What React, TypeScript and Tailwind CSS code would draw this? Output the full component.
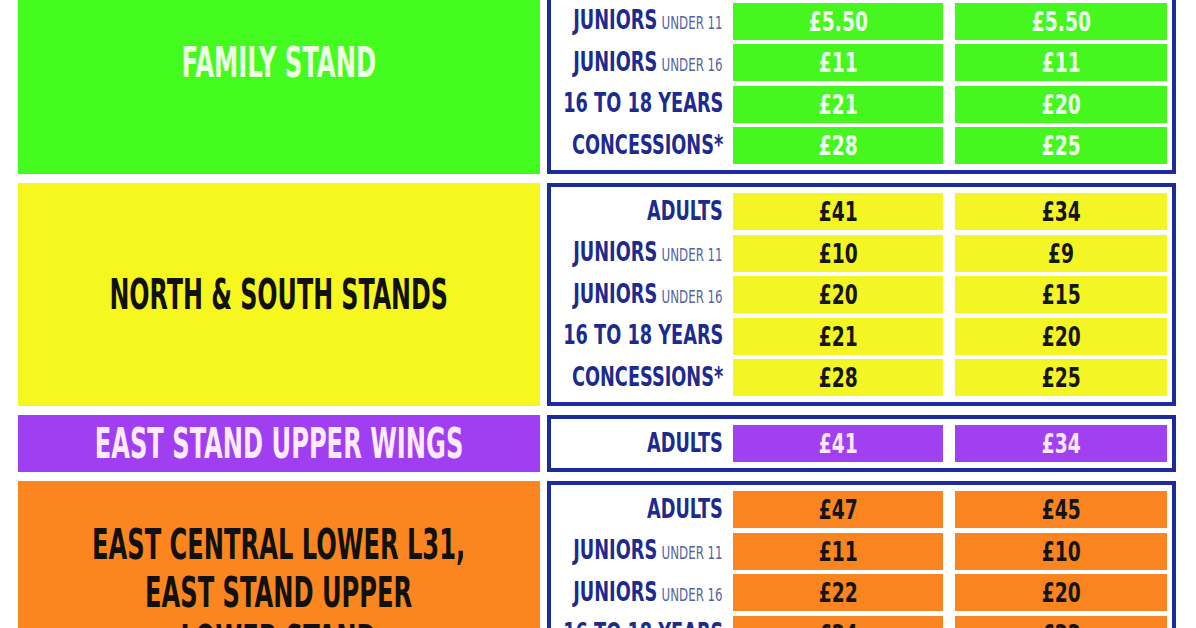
import React from "react";

type Row = { main: string; sub?: string; a: string; b: string };
type Section = {
  panel: string;
  cell: string;
  headText: string;
  cellText: string;
  heading: string[];
  headScale: string;
  rows: Row[];
};

const fullRows = (v: string[][]): Row[] => [
  { main: "ADULTS", a: v[0][0], b: v[0][1] },
  { main: "JUNIORS", sub: "UNDER 11", a: v[1][0], b: v[1][1] },
  { main: "JUNIORS", sub: "UNDER 16", a: v[2][0], b: v[2][1] },
  { main: "16 TO 18 YEARS", a: v[3][0], b: v[3][1] },
  { main: "CONCESSIONS*", a: v[4][0], b: v[4][1] },
];

const sections: Section[] = [
  {
    panel: "bg-[#44fb1f]",
    cell: "bg-[#45f61f]",
    headText: "text-[#ecffe4]",
    cellText: "text-[#effff0]",
    heading: ["FAMILY STAND"],
    headScale: "scale-x-[0.645]",
    rows: fullRows([
      ["£30", "£27"],
      ["£5.50", "£5.50"],
      ["£11", "£11"],
      ["£21", "£20"],
      ["£28", "£25"],
    ]),
  },
  {
    panel: "bg-[#f6f71f]",
    cell: "bg-[#f4f524]",
    headText: "text-[#111111]",
    cellText: "text-[#161616]",
    heading: ["NORTH & SOUTH STANDS"],
    headScale: "scale-x-[0.63]",
    rows: fullRows([
      ["£41", "£34"],
      ["£10", "£9"],
      ["£20", "£15"],
      ["£21", "£20"],
      ["£28", "£25"],
    ]),
  },
  {
    panel: "bg-[#a03ff2]",
    cell: "bg-[#a140f0]",
    headText: "text-[#ffeaff]",
    cellText: "text-[#ffe8ff]",
    heading: ["EAST STAND UPPER WINGS"],
    headScale: "scale-x-[0.64]",
    rows: [{ main: "ADULTS", a: "£41", b: "£34" }],
  },
  {
    panel: "bg-[#fb851f]",
    cell: "bg-[#fa8420]",
    headText: "text-[#111111]",
    cellText: "text-[#141414]",
    heading: ["EAST CENTRAL LOWER L31,", "EAST STAND UPPER", "LOWER STAND"],
    headScale: "scale-x-[0.64]",
    rows: fullRows([
      ["£47", "£45"],
      ["£11", "£10"],
      ["£22", "£20"],
      ["£24", "£22"],
      ["£30", "£28"],
    ]),
  },
];

const FONT = "font-['Liberation_Sans_Narrow','DejaVu_Sans_Condensed','Liberation_Sans',sans-serif]";

function SectionBlock({ s }: { s: Section }) {
  return (
    <div className="flex">
      <div className={`w-[522px] shrink-0 ${s.panel} flex items-center justify-center`}>
        <div
          className={`inline-block ${s.headScale} text-center text-[42px] leading-[48px] font-bold ${s.headText}`}
        >
          {s.heading.map((h, i) => (
            <div key={i} className="whitespace-nowrap">
              {h}
            </div>
          ))}
        </div>
      </div>
      <div className="ml-[7px] w-[629px] shrink-0 border-[4px] border-[#1b2b9c] bg-white py-[6px] flex flex-col gap-y-[4.5px]">
        {s.rows.map((r, i) => (
          <div key={i} className="flex items-stretch h-[37px]">
            <div className="w-[172px] shrink-0 flex items-center justify-end">
              <span className="inline-block origin-right scale-x-[0.73] whitespace-nowrap text-[#1c2b8e]">
                <span className="font-bold text-[27px] leading-none">{r.main}</span>
                {r.sub && (
                  <span className="ml-[6px] text-[18px] leading-none text-[#5363a6]">{r.sub}</span>
                )}
              </span>
            </div>
            <div className={`ml-[10px] w-[210px] shrink-0 ${s.cell} flex items-center justify-center`}>
              <span className={`inline-block scale-x-[0.77] font-bold text-[27px] leading-none ${s.cellText}`}>
                {r.a}
              </span>
            </div>
            <div className={`ml-[12px] w-[212px] shrink-0 ${s.cell} flex items-center justify-center`}>
              <span className={`inline-block scale-x-[0.77] font-bold text-[27px] leading-none ${s.cellText}`}>
                {r.b}
              </span>
            </div>
          </div>
        ))}
      </div>
    </div>
  );
}

export default function App() {
  return (
    <div className={`w-[1196px] h-[628px] overflow-hidden bg-white ${FONT}`}>
      <div className="-mt-[49px] pl-[18px] flex flex-col gap-[9px]">
        {sections.map((s, i) => (
          <SectionBlock key={i} s={s} />
        ))}
      </div>
    </div>
  );
}
